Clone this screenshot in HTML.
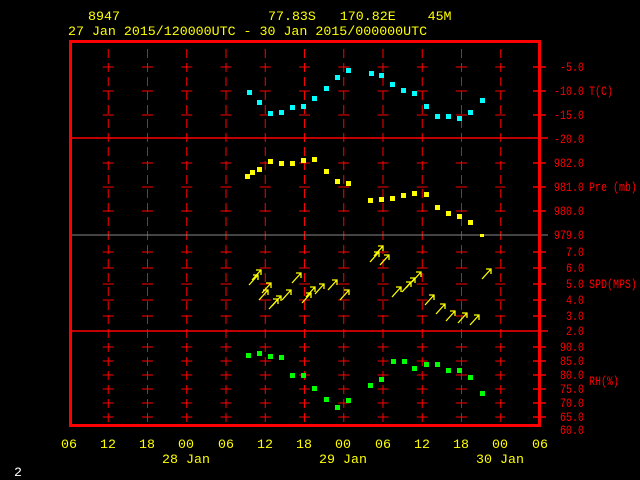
<!DOCTYPE html>
<html><head><style>
html,body{margin:0;padding:0;background:#000;width:640px;height:480px;overflow:hidden}
svg{display:block}
text{font-family:"Liberation Mono",monospace;font-size:13.3px}
.r text{font-size:12.5px}
</style></head><body>
<svg width="640" height="480" viewBox="0 0 640 480">
<g fill="#ffff00">
<text x="88" y="20">8947</text>
<text x="268" y="20" xml:space="preserve">77.83S   170.82E    45M</text>
<text x="68" y="35">27 Jan 2015/120000UTC - 30 Jan 2015/000000UTC</text>
</g>
<g stroke="#ff0000" stroke-width="1" fill="none">
<g stroke-dasharray="11 28.25">
<line x1="102.75" x2="505" y1="67" y2="67"/><line x1="102.75" x2="505" y1="91" y2="91"/><line x1="102.75" x2="505" y1="115" y2="115"/>
<line x1="102.75" x2="505" y1="163" y2="163"/><line x1="102.75" x2="505" y1="187" y2="187"/><line x1="102.75" x2="505" y1="211" y2="211"/>
<line x1="102.75" x2="505" y1="252" y2="252"/><line x1="102.75" x2="505" y1="268" y2="268"/><line x1="102.75" x2="505" y1="284" y2="284"/><line x1="102.75" x2="505" y1="300" y2="300"/><line x1="102.75" x2="505" y1="316" y2="316"/>
<line x1="102.75" x2="505" y1="347" y2="347"/><line x1="102.75" x2="505" y1="361" y2="361"/><line x1="102.75" x2="505" y1="375" y2="375"/><line x1="102.75" x2="505" y1="389" y2="389"/><line x1="102.75" x2="505" y1="403" y2="403"/><line x1="102.75" x2="505" y1="417" y2="417"/>
</g>
<g stroke-dasharray="9 5">
<line x1="108.25" x2="108.25" y1="49" y2="422"/><line x1="147.5" x2="147.5" y1="49" y2="422"/><line x1="186.75" x2="186.75" y1="49" y2="422"/><line x1="226" x2="226" y1="49" y2="422"/><line x1="265.25" x2="265.25" y1="49" y2="422"/><line x1="304.5" x2="304.5" y1="49" y2="422"/><line x1="343.75" x2="343.75" y1="49" y2="422"/><line x1="383" x2="383" y1="49" y2="422"/><line x1="422.25" x2="422.25" y1="49" y2="422"/><line x1="461.5" x2="461.5" y1="49" y2="422"/><line x1="500.75" x2="500.75" y1="49" y2="422"/>
</g>
<line x1="70" x2="548" y1="138" y2="138" stroke-width="1.5"/>
<line x1="70" x2="548" y1="235" y2="235" stroke="#888"/>
<line x1="70" x2="548" y1="331" y2="331" stroke-width="1.5"/>
<g stroke-width="1.5">
<line x1="533" x2="546" y1="67" y2="67"/><line x1="533" x2="546" y1="91" y2="91"/><line x1="533" x2="546" y1="115" y2="115"/>
<line x1="533" x2="546" y1="163" y2="163"/><line x1="533" x2="546" y1="187" y2="187"/><line x1="533" x2="546" y1="211" y2="211"/>
<line x1="533" x2="546" y1="252" y2="252"/><line x1="533" x2="546" y1="268" y2="268"/><line x1="533" x2="546" y1="284" y2="284"/><line x1="533" x2="546" y1="300" y2="300"/><line x1="533" x2="546" y1="316" y2="316"/>
<line x1="533" x2="546" y1="347" y2="347"/><line x1="533" x2="546" y1="361" y2="361"/><line x1="533" x2="546" y1="375" y2="375"/><line x1="533" x2="546" y1="389" y2="389"/><line x1="533" x2="546" y1="403" y2="403"/><line x1="533" x2="546" y1="417" y2="417"/>
</g>
<rect x="70.5" y="41.5" width="469" height="384" stroke-width="3"/>
</g>
<g class="r">
<g fill="#ff0000" text-anchor="end" transform="translate(584,0) scale(0.8,1)">
<text x="0" y="71">-5.0</text><text x="0" y="95">-10.0</text><text x="0" y="119">-15.0</text><text x="0" y="143">-20.0</text>
<text x="0" y="167">982.0</text><text x="0" y="191">981.0</text><text x="0" y="215">980.0</text><text x="0" y="239">979.0</text>
<text x="0" y="256">7.0</text><text x="0" y="272">6.0</text><text x="0" y="288">5.0</text><text x="0" y="304">4.0</text><text x="0" y="320">3.0</text><text x="0" y="335">2.0</text>
<text x="0" y="351">90.0</text><text x="0" y="365">85.0</text><text x="0" y="379">80.0</text><text x="0" y="393">75.0</text><text x="0" y="407">70.0</text><text x="0" y="421">65.0</text><text x="0" y="434">60.0</text>
</g>
<g fill="#ff0000" transform="translate(589,0) scale(0.8,1)">
<text x="0" y="95">T(C)</text><text x="0" y="191" xml:space="preserve">Pre (mb)</text><text x="0" y="288">SPD(MPS)</text><text x="0" y="385">RH(%)</text>
</g>
</g>
<g fill="#ffff00" text-anchor="middle">
<text x="69" y="448">06</text><text x="108" y="448">12</text><text x="147" y="448">18</text><text x="186" y="448">00</text><text x="226" y="448">06</text><text x="265" y="448">12</text><text x="304" y="448">18</text><text x="343" y="448">00</text><text x="383" y="448">06</text><text x="422" y="448">12</text><text x="461" y="448">18</text><text x="500" y="448">00</text><text x="540" y="448">06</text>
<text x="186" y="463">28 Jan</text><text x="343" y="463">29 Jan</text><text x="500" y="463">30 Jan</text>
</g>
<text x="14" y="476" fill="#fff">2</text>
<g fill="#00ffff">
<rect x="247" y="90" width="5" height="5"/><rect x="257" y="100" width="5" height="5"/><rect x="268" y="111" width="5" height="5"/><rect x="279" y="110" width="5" height="5"/><rect x="290" y="105" width="5" height="5"/><rect x="301" y="104" width="5" height="5"/><rect x="312" y="96" width="5" height="5"/><rect x="324" y="86" width="5" height="5"/><rect x="335" y="75" width="5" height="5"/><rect x="346" y="68" width="5" height="5"/><rect x="369" y="71" width="5" height="5"/><rect x="379" y="73" width="5" height="5"/><rect x="390" y="82" width="5" height="5"/><rect x="401" y="88" width="5" height="5"/><rect x="412" y="91" width="5" height="5"/><rect x="424" y="104" width="5" height="5"/><rect x="435" y="114" width="5" height="5"/><rect x="446" y="114" width="5" height="5"/><rect x="457" y="116" width="5" height="5"/><rect x="468" y="110" width="5" height="5"/><rect x="480" y="98" width="5" height="5"/>
</g>
<g fill="#ffff00">
<rect x="245" y="174" width="5" height="5"/><rect x="250" y="170" width="5" height="5"/><rect x="257" y="167" width="5" height="5"/><rect x="268" y="159" width="5" height="5"/><rect x="279" y="161" width="5" height="5"/><rect x="290" y="161" width="5" height="5"/><rect x="301" y="158" width="5" height="5"/><rect x="312" y="157" width="5" height="5"/><rect x="324" y="169" width="5" height="5"/><rect x="335" y="179" width="5" height="5"/><rect x="346" y="181" width="5" height="5"/><rect x="368" y="198" width="5" height="5"/><rect x="379" y="197" width="5" height="5"/><rect x="390" y="196" width="5" height="5"/><rect x="401" y="193" width="5" height="5"/><rect x="412" y="191" width="5" height="5"/><rect x="424" y="192" width="5" height="5"/><rect x="435" y="205" width="5" height="5"/><rect x="446" y="211" width="5" height="5"/><rect x="457" y="214" width="5" height="5"/><rect x="468" y="220" width="5" height="5"/><rect x="480" y="234" width="4" height="3"/>
</g>
<g fill="#00ff00">
<rect x="246" y="353" width="5" height="5"/><rect x="257" y="351" width="5" height="5"/><rect x="268" y="354" width="5" height="5"/><rect x="279" y="355" width="5" height="5"/><rect x="290" y="373" width="5" height="5"/><rect x="301" y="373" width="5" height="5"/><rect x="312" y="386" width="5" height="5"/><rect x="324" y="397" width="5" height="5"/><rect x="335" y="405" width="5" height="5"/><rect x="346" y="398" width="5" height="5"/><rect x="368" y="383" width="5" height="5"/><rect x="379" y="377" width="5" height="5"/><rect x="391" y="359" width="5" height="5"/><rect x="402" y="359" width="5" height="5"/><rect x="412" y="366" width="5" height="5"/><rect x="424" y="362" width="5" height="5"/><rect x="435" y="362" width="5" height="5"/><rect x="446" y="368" width="5" height="5"/><rect x="457" y="368" width="5" height="5"/><rect x="468" y="375" width="5" height="5"/><rect x="480" y="391" width="5" height="5"/>
</g>
<defs><path id="a" d="M0 0L9-10M4-10H9V-5" fill="none" stroke="#ffff00" stroke-width="1.3"/></defs>
<g>
<use href="#a" x="249" y="285"/><use href="#a" x="252" y="280"/><use href="#a" x="259" y="300"/><use href="#a" x="262" y="293"/><use href="#a" x="269" y="309"/><use href="#a" x="272" y="306"/><use href="#a" x="282" y="300"/><use href="#a" x="292" y="283"/><use href="#a" x="302" y="303"/><use href="#a" x="306" y="297"/><use href="#a" x="315" y="294"/><use href="#a" x="328" y="290"/><use href="#a" x="340" y="300"/><use href="#a" x="370" y="262"/><use href="#a" x="374" y="256"/><use href="#a" x="380" y="265"/><use href="#a" x="392" y="297"/><use href="#a" x="402" y="292"/><use href="#a" x="406" y="288"/><use href="#a" x="412" y="282"/><use href="#a" x="425" y="305"/><use href="#a" x="436" y="314"/><use href="#a" x="446" y="321"/><use href="#a" x="458" y="323"/><use href="#a" x="470" y="325"/><use href="#a" x="482" y="279"/>
</g>
</svg>
</body></html>
